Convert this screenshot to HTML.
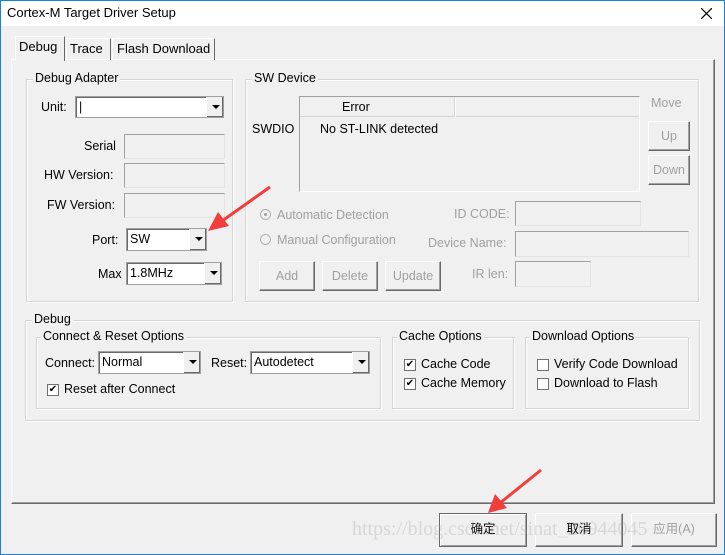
<!DOCTYPE html>
<html><head><meta charset="utf-8"><style>
*{margin:0;padding:0;box-sizing:border-box}
body{width:725px;height:555px;background:#f0f0f0;font-family:"Liberation Sans","Noto Sans CJK SC",sans-serif;font-size:12.5px;color:#000;position:relative;overflow:hidden}
.a{position:absolute}
.win{left:0;top:0;width:725px;height:555px;border:1px solid #1883d7}
.title{left:1px;top:1px;width:723px;height:25px;background:#fff}
.grp{position:absolute;border:1px solid #d5d5d5;box-shadow:inset 1px 1px 0 #fff,1px 1px 0 #fff}
.gt{position:absolute;top:-9px;left:6px;background:#f0f0f0;padding:0 2px;white-space:nowrap}
.edit{position:absolute;border:1px solid #a0a0a0;border-right-color:#e3e3e3;border-bottom-color:#e3e3e3;background:#f0f0f0}
.combo{position:absolute;border:1px solid #a0a0a0;background:#fff;padding:3px 3px;box-shadow:inset 1px 1px 0 #696969}
.combo .b{position:absolute;right:0;top:0;width:17px;height:100%;background:#f0f0f0;border-left:1px solid #fff;box-shadow:inset -1px -1px 0 #696969}
.combo .b:after{content:"";position:absolute;left:5px;top:8px;border-left:4px solid transparent;border-right:4px solid transparent;border-top:4px solid #000}
.btn{position:absolute;background:#f0f0f0;border:1px solid #fff;border-right-color:#696969;border-bottom-color:#696969;box-shadow:inset -1px -1px 0 #a0a0a0;text-align:center;color:#a0a0a0}
.lbl{position:absolute;white-space:nowrap}
.dis{color:#a0a0a0}
.cb{position:absolute;width:12px;height:12px;border:1px solid #707070;background:#fff;font-size:10px;line-height:10px;text-align:center}
</style></head><body>
<div class="a win"></div>
<div class="a title"></div>
<div class="lbl" style="left:7px;top:5px;font-size:13px">Cortex-M Target Driver Setup</div>
<svg class="a" style="left:701px;top:8px" width="11" height="11"><path d="M0 0L11 11M11 0L0 11" stroke="#000" stroke-width="1.2"/></svg>

<div class="a" style="left:11px;top:59px;width:704px;height:445px;border:1px solid #fff;border-right-color:#696969;border-bottom-color:#696969;box-shadow:inset -1px -1px 0 #a0a0a0"></div>
<div class="a" style="left:66px;top:38px;width:45px;height:22px;border:1px solid #fff;border-bottom:none;border-right-color:#696969"></div>
<div class="lbl" style="left:70px;top:41px;font-size:13px">Trace</div>
<div class="a" style="left:112px;top:38px;width:103px;height:22px;border:1px solid #fff;border-bottom:none;border-right-color:#696969"></div>
<div class="lbl" style="left:117px;top:41px;font-size:13px">Flash Download</div>
<div class="a" style="left:15px;top:36px;width:50px;height:25px;border:1px solid #fff;border-bottom:none;border-right-color:#696969;background:#f0f0f0"></div>
<div class="lbl" style="left:19px;top:39px;font-size:13px">Debug</div>

<div class="grp" style="left:26px;top:79px;width:207px;height:223px"><span class="gt">Debug Adapter</span></div>
<div class="lbl" style="left:41px;top:100px">Unit:</div>
<div class="combo" style="left:75px;top:96px;width:149px;height:22px">|<div class="b"></div></div>
<div class="lbl" style="left:84px;top:139px">Serial</div>
<div class="edit" style="left:124px;top:134px;width:101px;height:25px"></div>
<div class="lbl" style="left:44px;top:168px">HW Version:</div>
<div class="edit" style="left:124px;top:163px;width:101px;height:25px"></div>
<div class="lbl" style="left:47px;top:198px">FW Version:</div>
<div class="edit" style="left:124px;top:193px;width:101px;height:25px"></div>
<div class="lbl" style="left:92px;top:233px">Port:</div>
<div class="combo" style="left:126px;top:228px;width:81px;height:23px">SW<div class="b"></div></div>
<div class="lbl" style="left:98px;top:267px">Max</div>
<div class="combo" style="left:126px;top:262px;width:96px;height:23px">1.8MHz<div class="b"></div></div>

<div class="grp" style="left:245px;top:79px;width:454px;height:223px"><span class="gt">SW Device</span></div>
<div class="a" style="left:299px;top:96px;width:341px;height:96px;border:1px solid #a0a0a0;border-right-color:#fff;border-bottom-color:#fff;background:#f0f0f0"></div>
<div class="a" style="left:300px;top:97px;width:155px;height:20px;border-right:1px solid #d5d5d5;border-bottom:1px solid #d5d5d5"></div>
<div class="a" style="left:455px;top:97px;width:184px;height:20px;border-bottom:1px solid #d5d5d5;border-left:1px solid #fff"></div>
<div class="lbl" style="left:342px;top:100px">Error</div>
<div class="lbl" style="left:252px;top:122px">SWDIO</div>
<div class="lbl" style="left:320px;top:122px">No ST-LINK detected</div>
<div class="lbl dis" style="left:651px;top:96px">Move</div>
<div class="btn" style="left:648px;top:121px;width:42px;height:30px;line-height:28px">Up</div>
<div class="btn" style="left:648px;top:155px;width:42px;height:30px;line-height:28px">Down</div>
<div class="a" style="left:260px;top:209px;width:11px;height:11px;border-radius:50%;border:1px solid #b0b0b0;background:#f0f0f0"><div class="a" style="left:3px;top:3px;width:3px;height:3px;border-radius:50%;background:#a0a0a0"></div></div>
<div class="lbl dis" style="left:277px;top:208px">Automatic Detection</div>
<div class="a" style="left:260px;top:234px;width:11px;height:11px;border-radius:50%;border:1px solid #b0b0b0;background:#f0f0f0"></div>
<div class="lbl dis" style="left:277px;top:233px">Manual Configuration</div>
<div class="lbl dis" style="left:454px;top:207px">ID CODE:</div>
<div class="edit" style="left:515px;top:201px;width:126px;height:25px"></div>
<div class="lbl dis" style="left:428px;top:236px">Device Name:</div>
<div class="edit" style="left:515px;top:231px;width:174px;height:26px"></div>
<div class="lbl dis" style="left:472px;top:267px">IR len:</div>
<div class="edit" style="left:515px;top:261px;width:76px;height:26px"></div>
<div class="btn" style="left:259px;top:261px;width:56px;height:30px;line-height:28px">Add</div>
<div class="btn" style="left:322px;top:261px;width:56px;height:30px;line-height:28px">Delete</div>
<div class="btn" style="left:385px;top:261px;width:56px;height:30px;line-height:28px">Update</div>

<div class="grp" style="left:25px;top:320px;width:675px;height:101px"><span class="gt">Debug</span></div>
<div class="grp" style="left:36px;top:337px;width:345px;height:72px"><span class="gt" style="left:4px">Connect &amp; Reset Options</span></div>
<div class="lbl" style="left:45px;top:356px">Connect:</div>
<div class="combo" style="left:98px;top:351px;width:103px;height:23px">Normal<div class="b"></div></div>
<div class="lbl" style="left:211px;top:356px">Reset:</div>
<div class="combo" style="left:250px;top:351px;width:120px;height:23px">Autodetect<div class="b"></div></div>
<div class="cb" style="left:47px;top:384px">✔</div>
<div class="lbl" style="left:64px;top:382px">Reset after Connect</div>
<div class="grp" style="left:392px;top:337px;width:122px;height:72px"><span class="gt" style="left:4px">Cache Options</span></div>
<div class="cb" style="left:404px;top:359px">✔</div>
<div class="lbl" style="left:421px;top:357px">Cache Code</div>
<div class="cb" style="left:404px;top:378px">✔</div>
<div class="lbl" style="left:421px;top:376px">Cache Memory</div>
<div class="grp" style="left:525px;top:337px;width:164px;height:72px"><span class="gt" style="left:4px">Download Options</span></div>
<div class="cb" style="left:537px;top:359px"></div>
<div class="lbl" style="left:554px;top:357px">Verify Code Download</div>
<div class="cb" style="left:537px;top:378px"></div>
<div class="lbl" style="left:554px;top:376px">Download to Flash</div>

<div class="btn" style="left:439px;top:513px;width:88px;height:34px;line-height:30px;color:#000;border:1px solid #696969;box-shadow:inset 1px 1px 0 #fff,inset -1px -1px 0 #a0a0a0">确定</div>
<div class="btn" style="left:535px;top:513px;width:88px;height:34px;line-height:30px;color:#000">取消</div>
<div class="btn" style="left:631px;top:513px;width:86px;height:34px;line-height:30px">应用(A)</div>
<div class="lbl" style="left:352px;top:518px;font-family:'Liberation Serif',serif;font-size:20px;color:rgba(170,170,170,0.35)">https://blog.csdn.net/sinat_26944045</div>

<svg class="a" style="left:0;top:0" width="725" height="555">
<g fill="#f23d3d" stroke="#f23d3d">
<line x1="270" y1="187" x2="222" y2="221" stroke-width="3"/>
<polygon points="208,231 218,212 229,226" stroke="none"/>
<line x1="541" y1="470" x2="500" y2="503" stroke-width="3"/>
<polygon points="488,513 495,494 507,508" stroke="none"/>
</g>
</svg>
</body></html>
